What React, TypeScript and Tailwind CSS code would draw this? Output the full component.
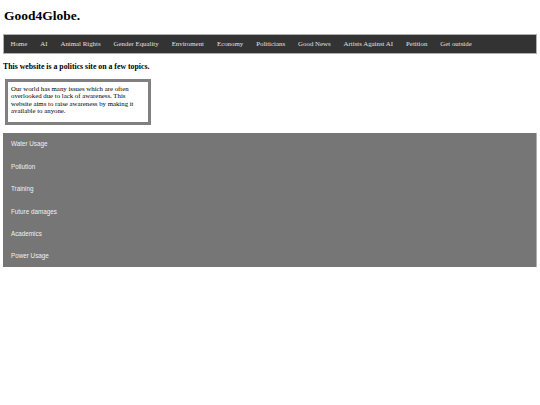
const navItems = ['Home', 'AI', 'Animal Rights', 'Gender Equality', 'Enviroment', 'Economy', 'Politicians', 'Good News', 'Artists Against AI', 'Petition', 'Get outside']
const topics = ['Water Usage', 'Pollution', 'Training', 'Future damages', 'Academics', 'Power Usage']

export default function App() {
    return (
        <div className="w-[540px] h-[405px] bg-white px-[3px] font-['Liberation_Serif',serif] text-black">
            {/* title */}
            <h1 className="pt-[9px] pl-[1px] text-[13.5px] font-bold leading-[14px]">Good4Globe.</h1>

            {/* nav */}
            <nav className="mt-[11px] h-[20px] bg-[#333333] border border-[#b0b0b0] flex items-center">
                {navItems.map(item => (
                    <a key={item} className="px-[6.5px] text-[6.85px] text-[#e0e0e0] leading-none">{item}</a>
                ))}
            </nav>

            <p className="mt-[8px] text-[7.8px] font-bold leading-[10px]">This website is a politics site on a few topics.</p>

            {/* intro box */}
            <div className="mt-[7px] ml-[2px] w-[146px] h-[46px] border-[3px] border-[#808080] pl-[3px] pr-[8px] pt-[3px] text-[6.8px] leading-[7.4px]">
                Our world has many issues which are often overlooked due to lack of awareness. This website aims to raise awareness by making it available to anyone.
            </div>

            {/* topics */}
            <section className="mt-[8px] bg-[#767676] border-r border-[#b0b0b0] flex flex-col">
                {topics.map(t => (
                    <div key={t} className="h-[22.4px] flex items-center px-[8px] font-['Liberation_Sans',sans-serif] text-[6.3px] text-[#f0f0f0]">{t}</div>
                ))}
            </section>
        </div>
    )
}
